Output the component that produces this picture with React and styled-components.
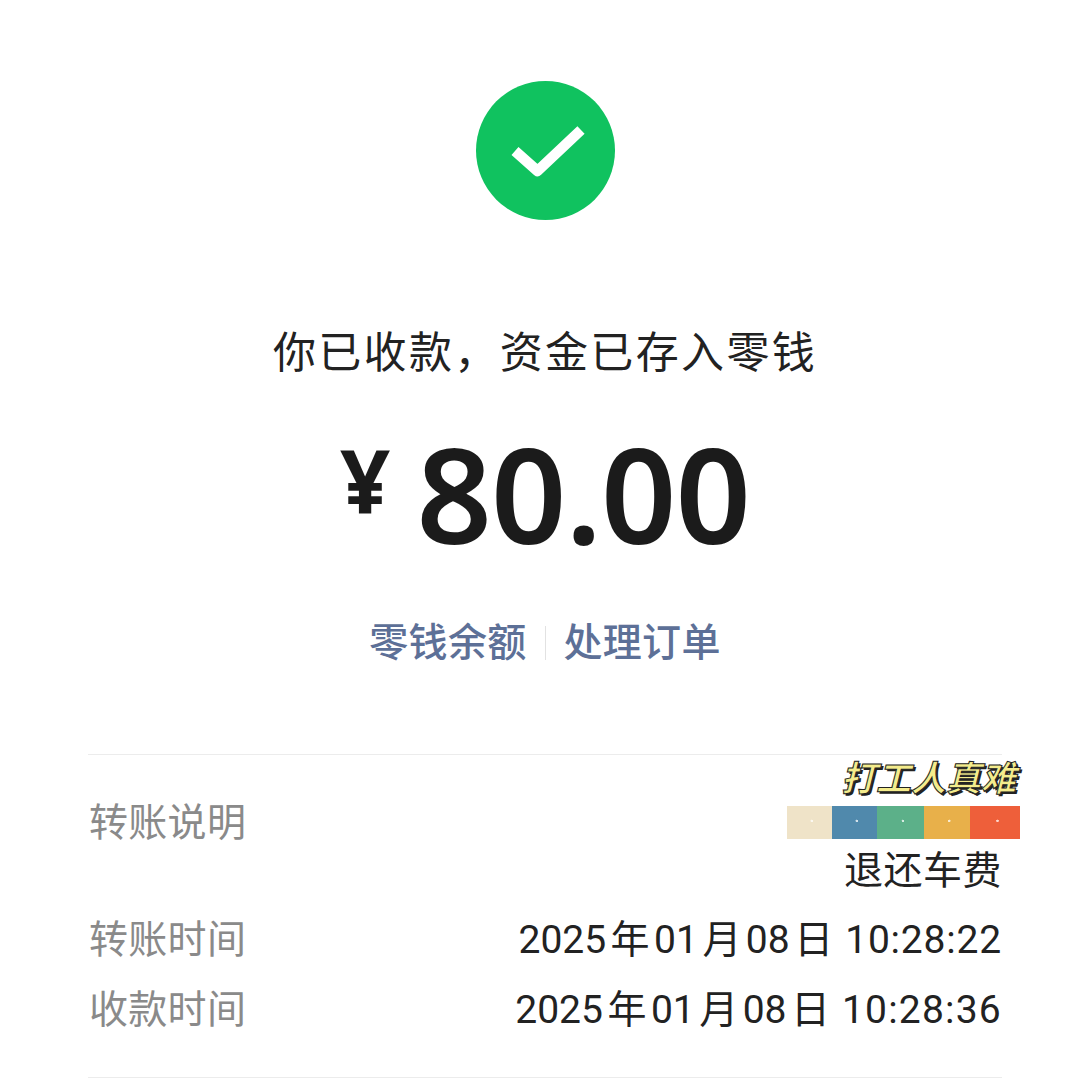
import styled, { createGlobalStyle } from "styled-components";

const GlobalStyle = createGlobalStyle`
  html, body {
    margin: 0;
    padding: 0;
    background: #fff;
  }
  body {
    font-family: Roboto, "Noto Sans CJK SC", sans-serif;
    overflow: hidden;
  }
`;

const swatches = [
  { color: "#efe3c8", width: 45 },
  { color: "#5089ac", width: 45 },
  { color: "#5cb089", width: 47 },
  { color: "#e8b04a", width: 46 },
  { color: "#ee5f3a", width: 50 },
];

export default function App() {
  return (
    <>
      <GlobalStyle />
      <Page>
        <CheckIcon viewBox="0 0 139 139">
          <circle cx="69.5" cy="69.5" r="69.5" fill="#10c25f" />
          <path d="M39 70 L61.5 90 L105 49" fill="none" stroke="#fff" strokeWidth="10.5" strokeLinejoin="round" />
        </CheckIcon>
        <Status>你已收款，资金已存入零钱</Status>
        <Amount>
          <Currency>¥</Currency>
          <Digits>80.00</Digits>
        </Amount>
        <Links>
          <LinkText>零钱余额</LinkText>
          <LinkDivider />
          <LinkText>处理订单</LinkText>
        </Links>
        <Details>
          <NoteRow>
            <NoteLabel>转账说明</NoteLabel>
            <NoteColumn>
              <Sticker>打工人真难</Sticker>
              <Palette>
                {swatches.map((s) => (
                  <Swatch key={s.color} $color={s.color} $width={s.width} />
                ))}
              </Palette>
              <NoteValue>退还车费</NoteValue>
            </NoteColumn>
          </NoteRow>
          <TimeRow>
            <Label>转账时间</Label>
            <TimeValue>
              <span>2025 年 01 月 08 日</span>
              <Clock $tracking={0.8}>10:28:22</Clock>
            </TimeValue>
          </TimeRow>
          <TimeRow>
            <Label>收款时间</Label>
            <TimeValue>
              <span>2025 年 01 月 08 日</span>
              <Clock $tracking={1.2}>10:28:36</Clock>
            </TimeValue>
          </TimeRow>
        </Details>
      </Page>
    </>
  );
}

const Page = styled.div`
  width: 1090px;
  height: 1080px;
  overflow: hidden;
  display: flex;
  flex-direction: column;
  align-items: center;
  padding-top: 81px;
  box-sizing: border-box;
  color: #1b1b1b;
`;
const CheckIcon = styled.svg`
  width: 139px;
  height: 139px;
  flex: none;
`;
const Status = styled.div`
  margin-top: 105px;
  font-size: 43px;
  line-height: 56px;
  letter-spacing: 2.35px;
  white-space: nowrap;
  color: #222;
`;
const Amount = styled.div`
  margin-top: 48px;
  display: flex;
  align-items: flex-start;
  gap: 26px;
  height: 138px;
  font-family: "Noto Sans", sans-serif;
`;
const Currency = styled.span`
  font-size: 88px;
  line-height: 94px;
  margin-top: 4px;
  font-weight: 700;
`;
const Digits = styled.span`
  font-size: 132px;
  line-height: 138px;
  margin-top: -5px;
  font-weight: 600;
  letter-spacing: -1px;
`;
const Links = styled.div`
  margin-top: 51px;
  display: flex;
  align-items: center;
  gap: 18px;
`;
const LinkText = styled.span`
  font-size: 39px;
  line-height: 50px;
  font-weight: 500;
  letter-spacing: 0.3px;
  color: #5d7097;
`;
const LinkDivider = styled.span`
  width: 1px;
  height: 34px;
  background: #e2e2e2;
`;
const Details = styled.div`
  margin-top: 86px;
  width: 914px;
  border-top: 1px solid #ececec;
  border-bottom: 1px solid #ececec;
  height: 324px;
  box-sizing: border-box;
  flex: none;
  display: flex;
  flex-direction: column;
`;
const NoteRow = styled.div`
  display: flex;
  justify-content: space-between;
  align-items: center;
`;
const Label = styled.span`
  font-size: 39px;
  line-height: 50px;
  letter-spacing: 0.3px;
  margin-left: 1px;
  color: #8a8a8a;
  white-space: nowrap;
`;
const NoteLabel = styled(Label)`
  margin-bottom: 5px;
`;
const NoteColumn = styled.div`
  display: flex;
  flex-direction: column;
  align-items: flex-end;
  margin-right: -18px;
`;
const Sticker = styled.div`
  font-size: 35px;
  line-height: 40px;
  margin-top: 5px;
  margin-right: 4px;
  font-weight: 700;
  font-style: italic;
  color: #f4ec8c;
  -webkit-text-stroke: 1px #222;
  text-shadow: 2px 2px 0 #222;
`;
const Palette = styled.div`
  display: flex;
  height: 33px;
  margin-top: 6px;
`;
const Swatch = styled.span`
  width: ${(p) => p.$width}px;
  background-color: ${(p) => p.$color};
  background-image: radial-gradient(circle at 55% 45%, rgba(255, 255, 255, 0.75) 1px, transparent 1.5px);
`;
const NoteValue = styled.div`
  font-size: 39px;
  line-height: 50px;
  letter-spacing: 0.5px;
  margin-top: 7px;
  margin-right: 18px;
  color: #222;
`;
const TimeRow = styled.div`
  display: flex;
  justify-content: space-between;
  align-items: center;
  height: 70px;
  &:nth-child(2) {
    margin-top: 9px;
  }
`;
const TimeValue = styled.span`
  display: flex;
  gap: 12px;
  font-size: 39px;
  line-height: 50px;
  color: #222;
  white-space: nowrap;
  word-spacing: -5.2px;
`;
const Clock = styled.span`
  letter-spacing: ${(p) => p.$tracking}px;
`;
